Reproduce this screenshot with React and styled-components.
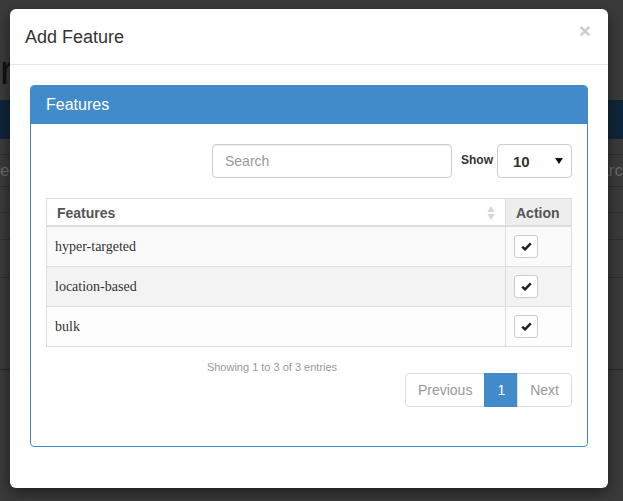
import { createGlobalStyle } from 'styled-components';
import styled from 'styled-components';

const GlobalStyle = createGlobalStyle`
  html, body {
    margin: 0;
    padding: 0;
    background: #3b3b3b;
    font-family: 'Liberation Sans', Arial, sans-serif;
  }
  * { box-sizing: border-box; }
`;

/* dimmed page behind the modal */
const Backdrop = styled.div`
  position: relative;
  width: 100%;
  height: 501px;
  overflow: hidden;
  background: #3b3b3b;
  display: flex;
  flex-direction: column;
`;

const PageTitle = styled.div`
  height: 100px;
  padding-top: 50px;
  font-size: 40px;
  line-height: 40px;
  color: #121212;
  white-space: nowrap;
`;

const PageNav = styled.div`
  height: 39px;
  background: #11253a;
`;

const PageRow = styled.div`
  height: ${({ $h }) => $h}px;
  border-bottom: 1px solid ${({ $line }) => $line || '#2f2f2f'};
  display: flex;
  justify-content: space-between;
  align-items: center;
  font-size: 17px;
  color: #6b6b6b;
  white-space: nowrap;
`;

const Overlay = styled.div`
  position: absolute;
  inset: 0;
`;

const Modal = styled.div`
  position: absolute;
  left: 10px;
  top: 9px;
  width: 598px;
  background: #fff;
  border-radius: 6px;
  box-shadow: 0 5px 15px rgba(0, 0, 0, 0.5);
`;

const ModalHeader = styled.div`
  height: 56px;
  padding: 16px 15px 14px;
  border-bottom: 1px solid #e5e5e5;
  display: flex;
  justify-content: space-between;
  align-items: flex-start;
`;

const ModalTitle = styled.h4`
  margin: 0;
  font-size: 18px;
  line-height: 25px;
  font-weight: 500;
  color: #333;
`;

const Close = styled.button`
  border: 0;
  padding: 0;
  background: transparent;
  font-family: 'Liberation Sans', Arial, sans-serif;
  font-size: 21px;
  font-weight: bold;
  line-height: 1;
  color: #000;
  opacity: 0.2;
  margin-top: -5px;
  margin-right: 2px;
`;

const ModalBody = styled.div`
  padding: 20px 20px 41px;
`;

const Panel = styled.div`
  border: 1px solid #428bca;
  border-radius: 4px;
  overflow: hidden;
`;

const PanelHeading = styled.div`
  background: #428bca;
  color: #fff;
  padding: 10px 15px;
  font-size: 16px;
  line-height: 18px;
`;

const PanelBody = styled.div`
  padding: 15px;
`;

const Toolbar = styled.div`
  margin-top: 5px;
  display: flex;
  justify-content: flex-end;
  align-items: center;
`;

const SearchInput = styled.input`
  width: 240px;
  height: 34px;
  padding: 6px 12px;
  border: 1px solid #ccc;
  border-radius: 4px;
  font-family: 'Liberation Sans', Arial, sans-serif;
  font-size: 14px;
  color: #555;
  box-shadow: inset 0 1px 1px rgba(0, 0, 0, 0.075);
  &::placeholder { color: #999; }
`;

const ShowLabel = styled.label`
  margin: 0 4px 0 9px;
  font-size: 12px;
  font-weight: bold;
  color: #333;
  padding-bottom: 3px;
`;

const LengthSelect = styled.div`
  width: 75px;
  height: 34px;
  border: 1px solid #ccc;
  border-radius: 4px;
  padding: 0 8px 0 15px;
  display: flex;
  align-items: center;
  justify-content: space-between;
  font-size: 15px;
  font-weight: bold;
  color: #333;
`;

const Table = styled.table`
  width: 100%;
  margin-top: 20px;
  border-collapse: collapse;
  border: 1px solid #ddd;
`;

const Th = styled.th`
  text-align: left;
  padding: 4px 10px 2px;
  font-size: 14px;
  line-height: 20px;
  font-weight: bold;
  color: #555;
  border: 1px solid #ddd;
  border-bottom: 2px solid #ddd;
  background: ${({ $shade }) => ($shade ? '#eee' : '#fff')};
  width: ${({ $w }) => ($w ? `${$w}px` : 'auto')};
`;

const ThInner = styled.div`
  display: flex;
  justify-content: space-between;
  align-items: center;
`;

const Tr = styled.tr`
  background: ${({ $bg }) => $bg};
`;

const Td = styled.td`
  padding: 8px;
  border: 1px solid #ddd;
  font-family: 'Liberation Serif', 'Times New Roman', serif;
  font-size: 14px;
  line-height: 20px;
  color: #333;
  vertical-align: middle;
`;

const CheckButton = styled.button`
  width: 24px;
  height: 23px;
  padding: 0;
  display: flex;
  align-items: center;
  justify-content: center;
  background: #fff;
  border: 1px solid #ccc;
  border-radius: 3px;
`;

const Footer = styled.div`
  padding-top: 14px;
  display: flex;
  flex-direction: column;
`;

const Info = styled.div`
  width: 452px;
  text-align: center;
  font-size: 11px;
  line-height: 12px;
  color: #999;
`;

const Pagination = styled.div`
  align-self: flex-end;
  display: flex;
  margin-bottom: 24px;
`;

const PageLink = styled.span`
  height: 34px;
  padding: 0 12px;
  display: flex;
  align-items: center;
  font-size: 14px;
  color: ${({ $active }) => ($active ? '#fff' : '#999')};
  background: ${({ $active }) => ($active ? '#428bca' : '#fff')};
  border: 1px solid ${({ $active }) => ($active ? '#428bca' : '#ddd')};
  margin-left: -1px;
  &:first-child {
    margin-left: 0;
    border-radius: 4px 0 0 4px;
  }
  &:last-child {
    border-radius: 0 4px 4px 0;
  }
`;

const CheckIcon = () => (
  <svg width="11" height="9" viewBox="0 0 11 9">
    <path d="M1.2 4.6 L4 7.4 L9.8 1.4" fill="none" stroke="#222" strokeWidth="2.5" />
  </svg>
);

const SortIcon = () => (
  <svg width="8" height="16" viewBox="0 0 8 16">
    <path d="M4 1 L7.5 7 H0.5 Z" fill="#d6d6d6" />
    <path d="M4 15 L7.5 9 H0.5 Z" fill="#d6d6d6" />
  </svg>
);

const Caret = () => (
  <svg width="8" height="6" viewBox="0 0 8 6">
    <path d="M0 0 H8 L4 6 Z" fill="#111" />
  </svg>
);

const features = ['hyper-targeted', 'location-based', 'bulk'];
const rowColors = ['#fafafa', '#f3f3f3', '#fdfdfd'];

export default function App() {
  return (
    <>
      <GlobalStyle />
      <Backdrop>
        <PageTitle>r</PageTitle>
        <PageNav />
        <PageRow $h={16} />
        <PageRow $h={32}>
          <span>e</span>
          <span>arc</span>
        </PageRow>
        <PageRow $h={26} />
        <PageRow $h={27} />
        <PageRow $h={38} />
        <PageRow $h={92} $line="#1b2a39" />
        <Overlay />
        <Modal>
          <ModalHeader>
            <ModalTitle>Add Feature</ModalTitle>
            <Close>×</Close>
          </ModalHeader>
          <ModalBody>
            <Panel>
              <PanelHeading>Features</PanelHeading>
              <PanelBody>
                <Toolbar>
                  <SearchInput placeholder="Search" />
                  <ShowLabel>Show</ShowLabel>
                  <LengthSelect>
                    <span>10</span>
                    <Caret />
                  </LengthSelect>
                </Toolbar>
                <Table>
                  <thead>
                    <tr>
                      <Th>
                        <ThInner>
                          Features
                          <SortIcon />
                        </ThInner>
                      </Th>
                      <Th $shade $w={66}>Action</Th>
                    </tr>
                  </thead>
                  <tbody>
                    {features.map((f, i) => (
                      <Tr key={f} $bg={rowColors[i]}>
                        <Td>{f}</Td>
                        <Td>
                          <CheckButton>
                            <CheckIcon />
                          </CheckButton>
                        </Td>
                      </Tr>
                    ))}
                  </tbody>
                </Table>
                <Footer>
                  <Info>Showing 1 to 3 of 3 entries</Info>
                  <Pagination>
                    <PageLink>Previous</PageLink>
                    <PageLink $active>1</PageLink>
                    <PageLink>Next</PageLink>
                  </Pagination>
                </Footer>
              </PanelBody>
            </Panel>
          </ModalBody>
        </Modal>
      </Backdrop>
    </>
  );
}
